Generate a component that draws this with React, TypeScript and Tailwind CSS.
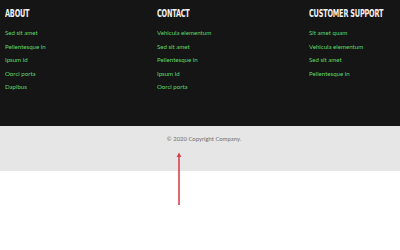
const columns = [
  { title: 'ABOUT', links: ['Sed sit amet', 'Pellentesque in', 'Ipsum id', 'Oorci porta', 'Dapibus'] },
  { title: 'CONTACT', links: ['Vehicula elementum', 'Sed sit amet', 'Pellentesque in', 'Ipsum id', 'Oorci porta'] },
  { title: 'CUSTOMER SUPPORT', links: ['Sit amet quam', 'Vehicula elementum', 'Sed sit amet', 'Pellentesque in'] },
];

export default function App() {
  return (
    <div className="w-[400px] h-[250px] bg-white overflow-hidden">
      <footer className="bg-[#151515] h-[126px] flex pl-[5px] pt-[8px]">
        {columns.map((col) => (
          <div key={col.title} className="w-[152px] shrink-0">
            <h4 className="text-[11px] leading-[11px] font-bold text-[#f2f2f2] font-[family-name:'DejaVu_Sans_Condensed',sans-serif] tracking-[-0.3px] origin-left scale-x-[0.66] whitespace-nowrap">
              {col.title}
            </h4>
            <ul className="mt-[10px] flex flex-col gap-[5.5px]">
              {col.links.map((l, i) => (
                <li key={i} className="text-[6.1px] leading-[8px] text-[#5fd86b] font-[family-name:Lato,sans-serif]">
                  {l}
                </li>
              ))}
            </ul>
          </div>
        ))}
      </footer>
      <div className="bg-[#e6e6e6] h-[45px] flex justify-center pt-[9px] pl-[8px]">
        <p className="text-[5.9px] leading-[8px] text-[#6e6e6e] font-[family-name:Lato,sans-serif]">© 2020 Copyright Company.</p>
      </div>
      <div className="flex">
        <svg width="400" height="80" viewBox="0 0 400 80" className="-mt-[20px]">
          <line x1="179" y1="3" x2="179" y2="54" stroke="#d9414f" strokeWidth="1.6" />
          <path d="M176.6 6 L179 1.5 L181.4 6 Z" fill="#d9414f" />
        </svg>
      </div>
    </div>
  );
}
